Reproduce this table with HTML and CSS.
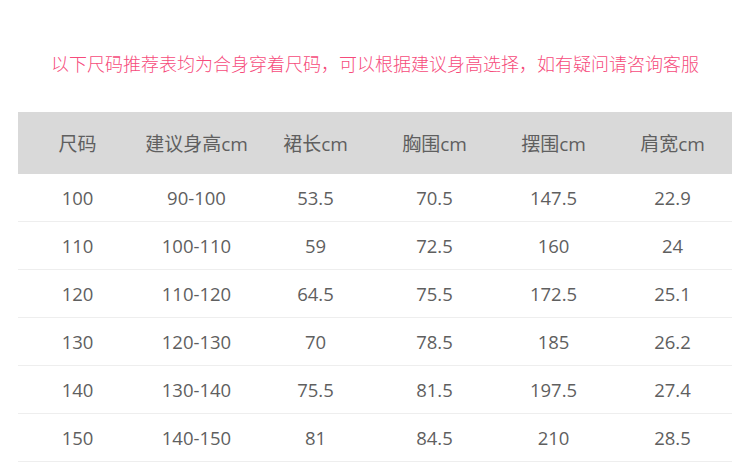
FILE: index.html
```html
<!DOCTYPE html>
<html lang="zh">
<head>
<meta charset="utf-8">
<link rel="stylesheet" href="styles.css">
</head>
<body>
<div class="page">
  <p class="note">以下尺码推荐表均为合身穿着尺码，可以根据建议身高选择，如有疑问请咨询客服</p>
  <table class="size-table">
    <thead>
      <tr><th>尺码</th><th>建议身高cm</th><th>裙长cm</th><th>胸围cm</th><th>摆围cm</th><th>肩宽cm</th></tr>
    </thead>
    <tbody>
      <tr><td>100</td><td>90-100</td><td>53.5</td><td>70.5</td><td>147.5</td><td>22.9</td></tr>
      <tr><td>110</td><td>100-110</td><td>59</td><td>72.5</td><td>160</td><td>24</td></tr>
      <tr><td>120</td><td>110-120</td><td>64.5</td><td>75.5</td><td>172.5</td><td>25.1</td></tr>
      <tr><td>130</td><td>120-130</td><td>70</td><td>78.5</td><td>185</td><td>26.2</td></tr>
      <tr><td>140</td><td>130-140</td><td>75.5</td><td>81.5</td><td>197.5</td><td>27.4</td></tr>
      <tr><td>150</td><td>140-150</td><td>81</td><td>84.5</td><td>210</td><td>28.5</td></tr>
    </tbody>
  </table>
</div>
</body>
</html>
```
FILE: styles.css
```css
html, body {
  margin: 0;
  padding: 0;
  background: #fff;
}
.page {
  width: 750px;
  padding: 0 18px;
  box-sizing: border-box;
  font-family: "Open Sans", "Noto Sans CJK SC", sans-serif;
}
.note {
  margin: 0;
  padding-top: 50px;
  height: 62px;
  box-sizing: content-box;
  text-align: center;
  font-size: 18px;
  line-height: 26px;
  color: #f64b7b;
  font-family: "Noto Sans CJK SC", sans-serif;
  font-weight: 300;
}
.size-table {
  width: 714px;
  border-collapse: collapse;
  table-layout: fixed;
  color: #5f5f5f;
  font-size: 18.5px;
}
.size-table th {
  background: #d9d9d9;
  height: 62px;
  padding: 0;
  font-size: 19px;
  font-weight: normal;
  text-align: center;
}
.size-table td {
  height: 47px;
  padding: 0;
  text-align: center;
  border-bottom: 1px solid #eee;
}
```
